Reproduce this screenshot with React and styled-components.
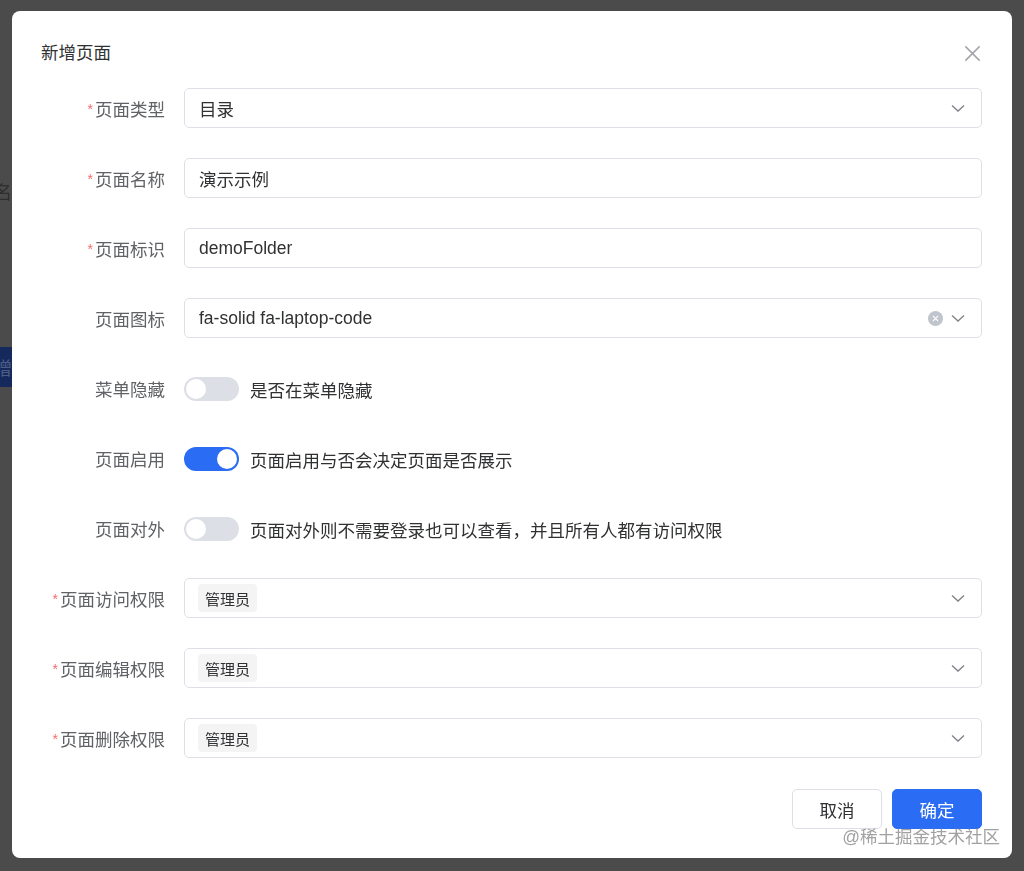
import React from 'react'
import styled, { createGlobalStyle } from 'styled-components'

const GlobalStyle = createGlobalStyle`
html, body {
  margin: 0;
  padding: 0;
  background: #4b4b4b;
  font-family: "Liberation Sans", "Noto Sans CJK SC", sans-serif;
}
* { box-sizing: border-box; }
`

const Backdrop = styled.div`
position: fixed;
inset: 0;
background: #4b4b4b;
z-index: 0;
`

const BehindText = styled.div`
position: absolute;
left: -6px;
top: 178px;
font-size: 18px;
color: #2e2e2e;
`

const BehindButton = styled.div`
position: absolute;
left: -40px;
top: 347px;
width: 52px;
height: 40px;
background: #16295c;
color: #4d5d85;
font-size: 18px;
display: flex;
align-items: center;
justify-content: flex-end;
`

const Page = styled.div`
position: relative;
z-index: 1;
padding: 11px 12px 13px 12px;
`

const Dialog = styled.div`
position: relative;
width: 1000px;
height: 847px;
background: #fff;
border-radius: 8px;
display: flex;
flex-direction: column;
`

const Header = styled.div`
display: flex;
align-items: center;
justify-content: space-between;
height: 54px;
padding: 30px 30px 0 29px;
`

const Title = styled.div`
font-size: 17.5px;
line-height: 24px;
color: #303133;
`

const Close = styled.button`
border: none;
background: none;
padding: 0;
width: 20px;
height: 20px;
display: flex;
align-items: center;
justify-content: center;
cursor: pointer;
`

const Form = styled.div`
display: flex;
flex-direction: column;
gap: 30px;
padding: 23px 30px 0 30px;
`

const Row = styled.div`
display: flex;
align-items: center;
height: 40px;
`

const Label = styled.label`
width: 142px;
padding-right: 19px;
text-align: right;
font-size: 17.5px;
color: #606266;
white-space: nowrap;
`

const Star = styled.span`
color: #f56c6c;
font-size: 14px;
margin-right: 2px;
vertical-align: 2px;
`

const Field = styled.div`
flex: 1;
height: 40px;
border: 1px solid #dcdfe6;
border-radius: 5px;
display: flex;
align-items: center;
padding: 0 15px 0 ${(p) => (p.$tags ? '13px' : '14px')};
font-size: 17.5px;
color: #303133;
`

const Value = styled.span`
flex: 1;
`

const Icons = styled.span`
display: flex;
align-items: center;
gap: 7px;
`

const ClearIcon = styled.span`
width: 15px;
height: 15px;
border-radius: 50%;
background: #c0c4cc;
display: flex;
align-items: center;
justify-content: center;
`

const Tag = styled.span`
background: #f4f4f5;
border-radius: 4px;
height: 28px;
padding: 0 7px;
display: flex;
align-items: center;
font-size: 15px;
color: #303133;
margin-right: auto;
`

const SwitchRow = styled.div`
display: flex;
align-items: center;
gap: 11px;
font-size: 17.5px;
color: #303133;
margin-top: 2px;
`

const Track = styled.span`
width: 55px;
height: 24px;
border-radius: 12px;
background: ${(p) => (p.$on ? '#2a6cf3' : '#dcdfe6')};
display: flex;
align-items: center;
justify-content: ${(p) => (p.$on ? 'flex-end' : 'flex-start')};
padding: 0 2px;
`

const Knob = styled.span`
width: 20px;
height: 20px;
border-radius: 50%;
background: #fff;
`

const Footer = styled.div`
display: flex;
justify-content: flex-end;
gap: 10px;
padding: 31px 30px 0 30px;
`

const Button = styled.button`
width: 90px;
height: 40px;
border-radius: 5px;
font-size: 17.5px;
font-family: inherit;
border: 1px solid ${(p) => (p.$primary ? '#2a6cf3' : '#dcdfe6')};
background: ${(p) => (p.$primary ? '#2a6cf3' : '#fff')};
color: ${(p) => (p.$primary ? '#fff' : '#303133')};
cursor: pointer;
`

const Watermark = styled.div`
position: absolute;
right: 12px;
bottom: 10px;
font-size: 17.5px;
color: rgba(130, 130, 130, 0.75);
pointer-events: none;
`

const Chevron = () => (
  <svg width="16" height="16" viewBox="0 0 16 16">
    <polyline points="2,5.5 8,11 14,5.5" fill="none" stroke="#7d8087" strokeWidth="1.3" />
  </svg>
)

const Cross = ({ size, color, width }) => (
  <svg width={size} height={size} viewBox="0 0 16 16">
    <path d="M2 2 L14 14 M14 2 L2 14" stroke={color} strokeWidth={width} />
  </svg>
)

const Switch = ({ on, text }) => (
  <SwitchRow>
    <Track $on={on}><Knob /></Track>
    {text}
  </SwitchRow>
)

const FormLabel = ({ required, children }) => (
  <Label>{required && <Star>*</Star>}{children}</Label>
)

const App = () => {
  return (
    <>
      <GlobalStyle />
      <Backdrop>
        <BehindText>名称</BehindText>
        <BehindButton>增</BehindButton>
      </Backdrop>
      <Page>
        <Dialog>
          <Header>
            <Title>新增页面</Title>
            <Close><Cross size={19} color="#a0a3a9" width={1.2} /></Close>
          </Header>
          <Form>
            <Row>
              <FormLabel required>页面类型</FormLabel>
              <Field><Value>目录</Value><Chevron /></Field>
            </Row>
            <Row>
              <FormLabel required>页面名称</FormLabel>
              <Field><Value>演示示例</Value></Field>
            </Row>
            <Row>
              <FormLabel required>页面标识</FormLabel>
              <Field><Value>demoFolder</Value></Field>
            </Row>
            <Row>
              <FormLabel>页面图标</FormLabel>
              <Field>
                <Value>fa-solid fa-laptop-code</Value>
                <Icons>
                  <ClearIcon><Cross size={7} color="#fff" width={2.6} /></ClearIcon>
                  <Chevron />
                </Icons>
              </Field>
            </Row>
            <Row>
              <FormLabel>菜单隐藏</FormLabel>
              <Switch on={false} text="是否在菜单隐藏" />
            </Row>
            <Row>
              <FormLabel>页面启用</FormLabel>
              <Switch on text="页面启用与否会决定页面是否展示" />
            </Row>
            <Row>
              <FormLabel>页面对外</FormLabel>
              <Switch on={false} text="页面对外则不需要登录也可以查看，并且所有人都有访问权限" />
            </Row>
            <Row>
              <FormLabel required>页面访问权限</FormLabel>
              <Field $tags><Tag>管理员</Tag><Chevron /></Field>
            </Row>
            <Row>
              <FormLabel required>页面编辑权限</FormLabel>
              <Field $tags><Tag>管理员</Tag><Chevron /></Field>
            </Row>
            <Row>
              <FormLabel required>页面删除权限</FormLabel>
              <Field $tags><Tag>管理员</Tag><Chevron /></Field>
            </Row>
          </Form>
          <Footer>
            <Button>取消</Button>
            <Button $primary>确定</Button>
          </Footer>
          <Watermark>@稀土掘金技术社区</Watermark>
        </Dialog>
      </Page>
    </>
  )
}

export default App
